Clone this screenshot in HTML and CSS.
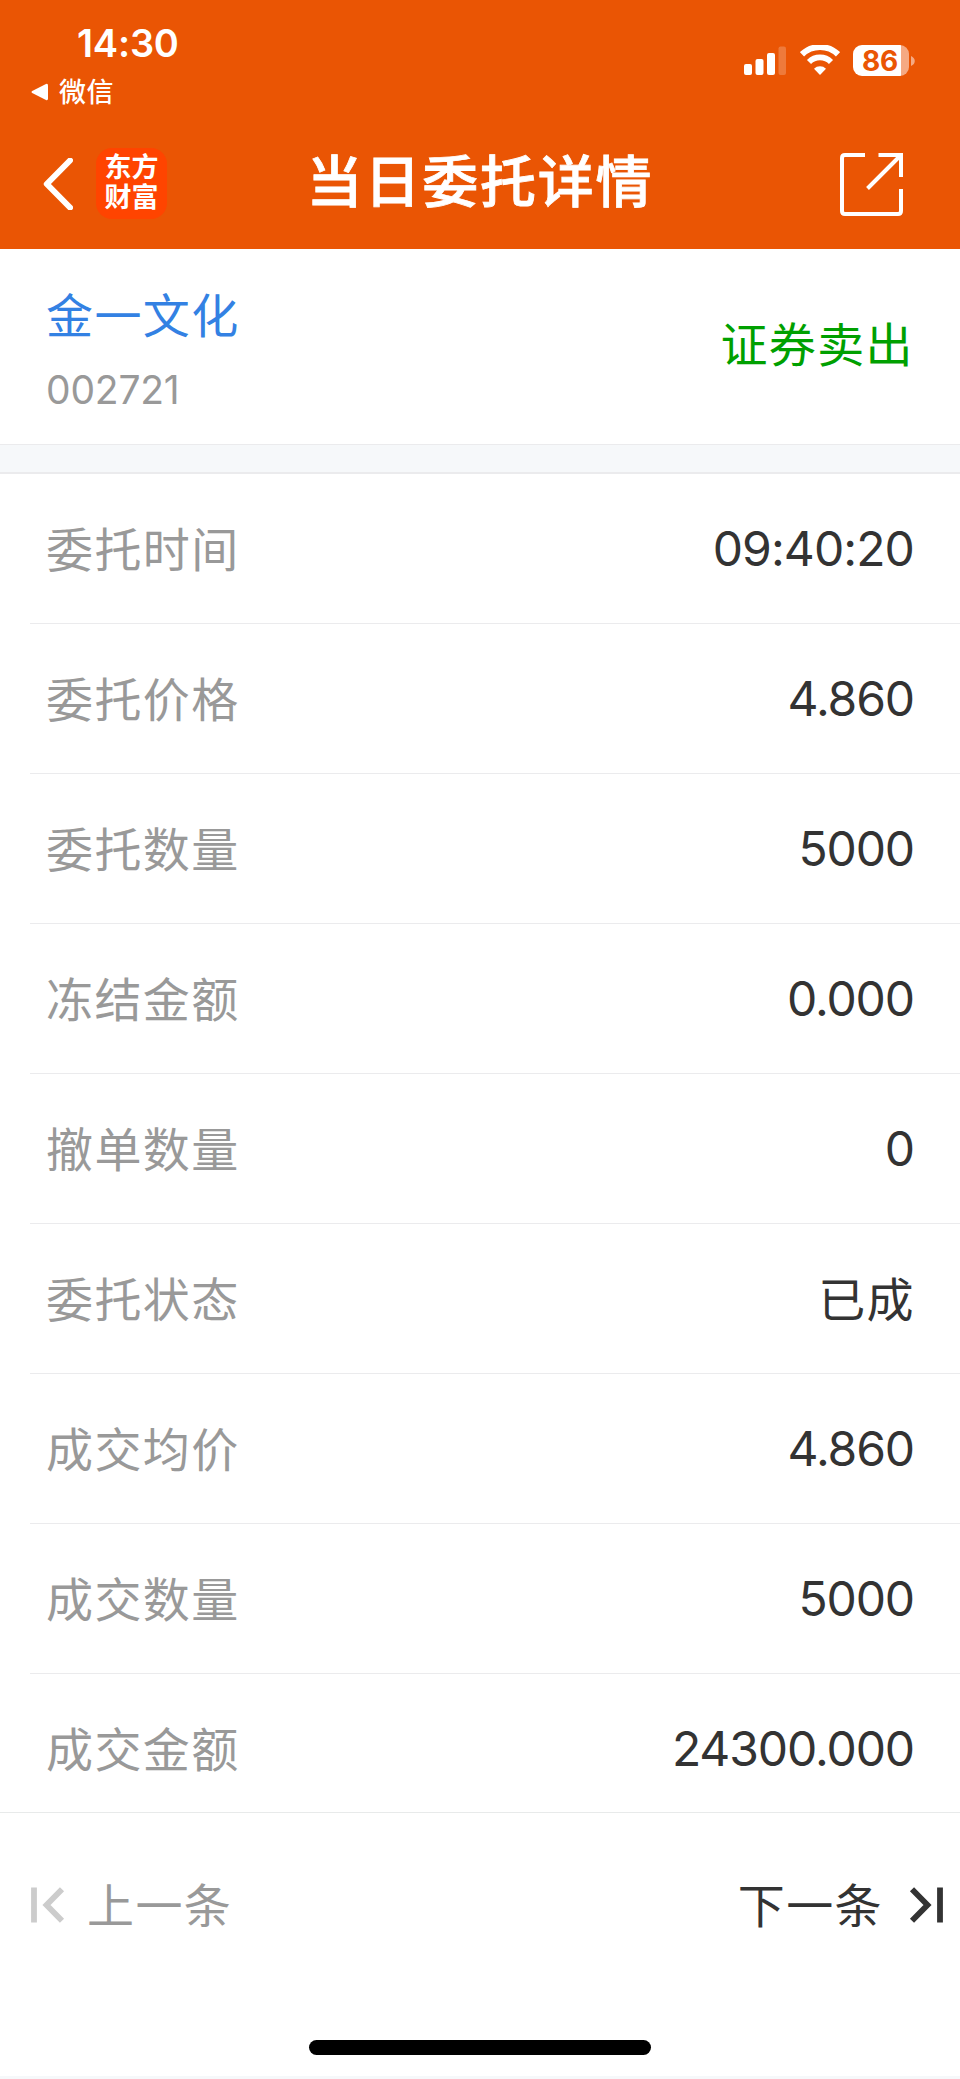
FILE: index.html
```html
<!DOCTYPE html>
<html lang="zh-CN">
<head>
<meta charset="utf-8">
<title>当日委托详情</title>
<link rel="stylesheet" href="styles.css">
</head>
<body>
<header class="header">
  <div class="status">
    <div class="status-left">
      <div class="time">14:30</div>
      <div class="back-app">
        <svg width="18" height="18" viewBox="0 0 18 18"><path d="M1.2 8 L15 1 Q17 .2 17 2.5 V15.500 Q17 17.800 15 17 L1.200 10 Q-.2 9 1.200 8Z" fill="#fff"/></svg>
        <span>微信</span>
      </div>
    </div>
    <div class="status-right">
      <svg width="42" height="30" viewBox="0 0 42 30" fill="#fff">
        <rect x="0" y="19" width="8" height="11" rx="2"/>
        <rect x="11.500" y="14" width="8" height="16" rx="2"/>
        <rect x="23" y="8" width="8" height="22" rx="2"/>
        <rect x="34.500" y="1.500" width="7.500" height="28.500" rx="2" opacity=".22"/>
      </svg>
      <svg class="wifi" width="40" height="30" viewBox="0 0 40 30">
        <g fill="none" stroke="#fff">
          <path d="M2 9.300 A26 26 0 0 1 38 9.300" stroke-width="6"/>
          <path d="M9 17 A15.500 15.500 0 0 1 31 17" stroke-width="5.800"/>
        </g>
        <path d="M20 30 L14 23.800 A8.600 8.600 0 0 1 26 23.800 Z" fill="#fff"/>
      </svg>
      <div class="battery"><span>86</span></div>
      <svg class="battery-cap" width="4" height="10" viewBox="0 0 4 10"><path d="M0 0 C5 2 5 8 0 10Z" fill="#f5a983"/></svg>
    </div>
  </div>
  <nav class="nav">
    <div class="nav-left">
      <svg width="30" height="52" viewBox="0 0 30 52" fill="none" stroke="#fff" stroke-width="6"><path d="M27 2.500 L3.800 26 L27 49.500" stroke-linecap="round" stroke-linejoin="round"/></svg>
      <div class="logo"><span>东方</span><span>财富</span></div>
    </div>
    <h1 class="title">当日委托详情</h1>
    <svg class="share" width="63" height="63" viewBox="0 0 63 63" fill="none" stroke="#fff" stroke-width="4"><path d="M25 2 H5 Q2 2 2 5 V58 Q2 61 5 61 H58 Q61 61 61 58 V36 M38.500 2 H61 V24 M61 2 L27.500 35.500"/></svg>
  </nav>
</header>
<section class="stock">
  <div>
    <div class="stock-name">金一文化</div>
    <div class="stock-code">002721</div>
  </div>
  <div class="side">证券卖出</div>
</section>
<div class="gap"></div>
<main class="list">
  <div class="row"><span class="label">委托时间</span><span class="value time-value">09:40:20</span></div>
  <div class="row"><span class="label">委托价格</span><span class="value">4.860</span></div>
  <div class="row"><span class="label">委托数量</span><span class="value">5000</span></div>
  <div class="row"><span class="label">冻结金额</span><span class="value">0.000</span></div>
  <div class="row"><span class="label">撤单数量</span><span class="value">0</span></div>
  <div class="row"><span class="label">委托状态</span><span class="value cjk">已成</span></div>
  <div class="row"><span class="label">成交均价</span><span class="value">4.860</span></div>
  <div class="row"><span class="label">成交数量</span><span class="value">5000</span></div>
  <div class="row"><span class="label">成交金额</span><span class="value">24300.000</span></div>
</main>
<footer class="footer">
  <div class="pager">
    <div class="page prev">
      <svg width="34" height="36" viewBox="0 0 34 36" fill="none" stroke="#ccc" stroke-width="5.800"><path d="M3 .5 V35.500 M31 2.200 L15.500 18 L31 33.800"/></svg>
      <span>上一条</span>
    </div>
    <div class="page next">
      <span>下一条</span>
      <svg width="34" height="36" viewBox="0 0 34 36" fill="none" stroke="#333" stroke-width="5.800"><path d="M31 .5 V35.500 M3 2.200 L18.500 18 L3 33.800"/></svg>
    </div>
  </div>
  <div class="home"></div>
</footer>
</body>
</html>
```

FILE: styles.css
```css
* { box-sizing: border-box; }

body {
  margin: 0;
  width: 960px;
  height: 2079px;
  background: #fff;
  font-family: Inter, "Noto Sans CJK SC", sans-serif;
  color: #333;
  overflow: hidden;
}

svg { display: block; flex: none; }

.header {
  height: 249px;
  background: #ea5504;
  color: #fff;
}

.status {
  height: 121px;
  display: flex;
  justify-content: space-between;
}

.status-left { padding: 20px 0 0 31px; }

.time {
  padding-left: 46px;
  font-size: 38px;
  line-height: 46px;
  font-weight: 600;
  letter-spacing: -0.2px;
}

.back-app {
  display: flex;
  align-items: center;
  gap: 10px;
  height: 51px;
  font-size: 27px;
  line-height: 51px;
  font-weight: 500;
  letter-spacing: 0.5px;
}

.back-app span { padding-top: 1px; }

.status-right {
  display: flex;
  align-items: flex-start;
  padding: 45px 45px 0 0;
}

.wifi { margin: 0 13px 0 14px; }

.battery {
  width: 56px;
  height: 31px;
  border-radius: 9px;
  background: linear-gradient(90deg, #fff 48px, #f5a983 48px);
  color: #ea5504;
  font-size: 28px;
  line-height: 32px;
  font-weight: 700;
  padding-left: 9px;
  letter-spacing: -0.3px;
}

.battery-cap { margin: 11px 0 0 2px; }

.nav {
  height: 125px;
  display: grid;
  grid-template-columns: 200px 1fr 200px;
  align-items: center;
}

.nav-left {
  display: flex;
  align-items: center;
  gap: 23px;
  padding-left: 43px;
}

.logo {
  width: 71px;
  height: 71px;
  border-radius: 16px;
  background: #ff4400;
  display: flex;
  flex-direction: column;
  align-items: center;
  justify-content: center;
  padding-bottom: 2px;
  font-size: 27px;
  line-height: 30px;
  font-weight: 700;
}

.title {
  margin: 0;
  padding-bottom: 3px;
  text-align: center;
  font-size: 56px;
  line-height: 80px;
  letter-spacing: 1.8px;
  font-weight: 500;
  -webkit-text-stroke: 0.8px #fff;
}

.share {
  justify-self: end;
  margin: 1px 57px 0 0;
}

.stock {
  height: 195px;
  display: flex;
  justify-content: space-between;
  padding: 33px 46px 0;
}

.stock-name,
.side,
.label,
.cjk,
.page {
  font-size: 47px;
  line-height: 68px;
  letter-spacing: 1.4px;
}

.stock-name { color: #3381e3; }

.stock-code {
  color: #999;
  font-size: 39px;
  line-height: 48px;
  margin-top: 16px;
  letter-spacing: -0.2px;
}

.side {
  color: #00a000;
  padding-top: 29px;
}

.gap {
  height: 30px;
  background: #f6f8fa;
  border-top: 1px solid #ebebed;
  border-bottom: 2px solid #ebebed;
}

.list {
  height: 1338px;
  padding-left: 30px;
}

.row {
  height: 150px;
  display: flex;
  justify-content: space-between;
  align-items: center;
  padding: 2px 46px 0 16px;
  border-bottom: 1px solid #ebebed;
}

.row:last-child {
  height: 138px;
  padding-top: 14px;
  border-bottom: 0;
}

.label { color: #999; }

.value {
  font-size: 48px;
  line-height: 68px;
  letter-spacing: -1.1px;
  padding-bottom: 2px;
}

.time-value { letter-spacing: -0.9px; }

.value.cjk {
  font-size: 47px;
  letter-spacing: 1.4px;
  margin-right: -1px;
  padding-bottom: 0;
}

.footer {
  height: 267px;
  border-top: 1px solid #e8eaea;
  border-bottom: 3px solid #f6f8fa;
}

.pager {
  height: 184px;
  display: flex;
  justify-content: space-between;
  align-items: center;
  padding: 0 17px 0 31px;
}

.page {
  display: flex;
  align-items: center;
}

.prev { color: #999; gap: 22px; }
.next { gap: 26px; }

.page span { padding-top: 1px; }

.home {
  width: 342px;
  height: 15px;
  border-radius: 8px;
  background: #000;
  margin: 43px auto 0;
}
```
